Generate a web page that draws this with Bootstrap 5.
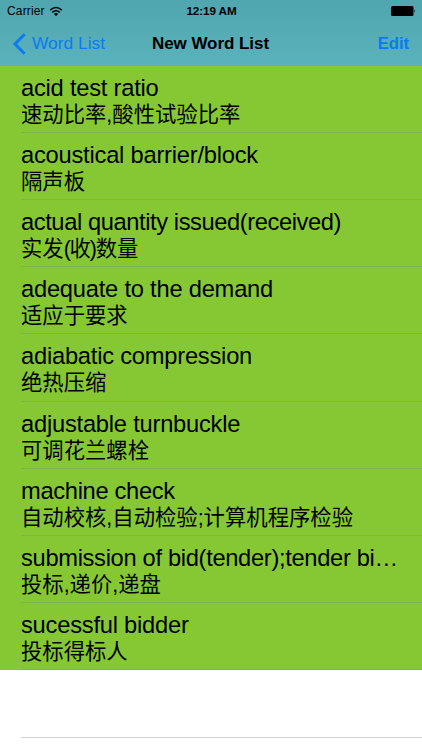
<!DOCTYPE html>
<html lang="en">
<head>
<meta charset="utf-8">
<meta name="viewport" content="width=device-width, initial-scale=1">
<title>New Word List</title>
<link href="https://cdn.jsdelivr.net/npm/bootstrap@5.3.0/dist/css/bootstrap.min.css" rel="stylesheet">
<style>
body{font-family:"Liberation Sans","Noto Sans CJK SC",sans-serif;color:#000}
.screen{height:750px}
.top-area{height:65.7px;background:linear-gradient(#50a6ae,#5ab2bc);flex:none}
.status-row{height:22px;font-size:12px;padding:0 6px 0 7px;line-height:22px}
.status-row>div{flex:1 1 0}
.status-row .carrier{letter-spacing:.15px}
.status-row .clock{font-weight:700;font-size:11.7px;letter-spacing:-.1px}
.title-row{height:43.6px;font-size:17.4px;padding:0 13px 0 12px;line-height:43px}
.title-row>*{flex:1 1 0}
.title-text{font-weight:700;font-size:17px;flex:0 0 auto;letter-spacing:-.05px}
.ios-link{color:#0b7bf0;text-decoration:none}
.edit-link{font-size:16.6px}
.word-item{height:67.2px;background:#86c834;padding:8.9px 0 0 21px;position:relative;flex:none}
.word-item::after{content:"";position:absolute;left:21px;right:0;bottom:0;height:1px;background:#7fb542}
.word-item.blank-item{background:#fff}
.word-item.blank-item::after{background:#d3d2d6;bottom:-.6px}
.term{font-size:23.7px;line-height:27px;letter-spacing:-.22px}
.term.tight{letter-spacing:-.41px}
.term.snug{letter-spacing:-.32px}
.meaning{font-size:21.35px;line-height:27px;font-weight:400}
.paren{letter-spacing:-1.2px}
</style>
<script src="https://cdn.jsdelivr.net/npm/bootstrap@5.3.0/dist/js/bootstrap.bundle.min.js"></script>
</head>
<body class="bg-white">
<main class="screen d-flex flex-column overflow-hidden">
<header class="top-area">
<div class="status-row d-flex align-items-center">
<div class="d-flex align-items-center"><span class="carrier">Carrier</span>
<svg class="ms-1" width="14" height="11" viewBox="0 0 14 11" fill="none" stroke="#000" stroke-width="1.5"><path d="M1.2 4.1Q7-1.1 12.8 4.1M3.3 6.4Q7 3.1 10.7 6.4"/><path d="M4.9 7.8Q7 6.2 9.1 7.8L7 10.2Z" fill="#000" stroke="none"/></svg></div>
<span class="clock">12:19 AM</span>
<div class="d-flex justify-content-end"><svg width="25" height="10" viewBox="0 0 25 10"><rect width="22.5" height="10" rx="1.5"/><path d="M23.3 3.4Q25 5 23.3 6.6Z"/></svg></div>
</div>
<nav class="title-row d-flex align-items-center">
<a href="#" class="ios-link d-flex align-items-center"><svg width="16" height="22" viewBox="0 0 16 22" fill="none" stroke="#0b7bf0" stroke-width="3"><path d="M12.6 1.2L3 11L12.6 20.8"/></svg><span class="ms-1">Word List</span></a>
<span class="title-text">New Word List</span>
<a href="#" class="ios-link edit-link text-end fw-bold">Edit</a>
</nav>
</header>
<section>
<div class="word-item"><div class="term text-nowrap">acid test ratio</div><div class="meaning text-nowrap">速动比率,酸性试验比率</div></div>
<div class="word-item"><div class="term text-nowrap">acoustical barrier/block</div><div class="meaning text-nowrap">隔声板</div></div>
<div class="word-item"><div class="term tight text-nowrap">actual quantity issued(received)</div><div class="meaning text-nowrap">实发<span class="paren">(收)</span>数量</div></div>
<div class="word-item"><div class="term text-nowrap">adequate to the demand</div><div class="meaning text-nowrap">适应于要求</div></div>
<div class="word-item"><div class="term text-nowrap">adiabatic compression</div><div class="meaning text-nowrap">绝热压缩</div></div>
<div class="word-item"><div class="term text-nowrap">adjustable turnbuckle</div><div class="meaning text-nowrap">可调花兰螺栓</div></div>
<div class="word-item"><div class="term snug text-nowrap">machine check</div><div class="meaning text-nowrap">自动校核,自动检验;计算机程序检验</div></div>
<div class="word-item"><div class="term snug text-nowrap">submission of bid(tender);tender bi…</div><div class="meaning text-nowrap">投标,递价,递盘</div></div>
<div class="word-item"><div class="term text-nowrap">sucessful bidder</div><div class="meaning text-nowrap">投标得标人</div></div>
<div class="word-item blank-item"></div>
</section>
</main>
</body>
</html>
